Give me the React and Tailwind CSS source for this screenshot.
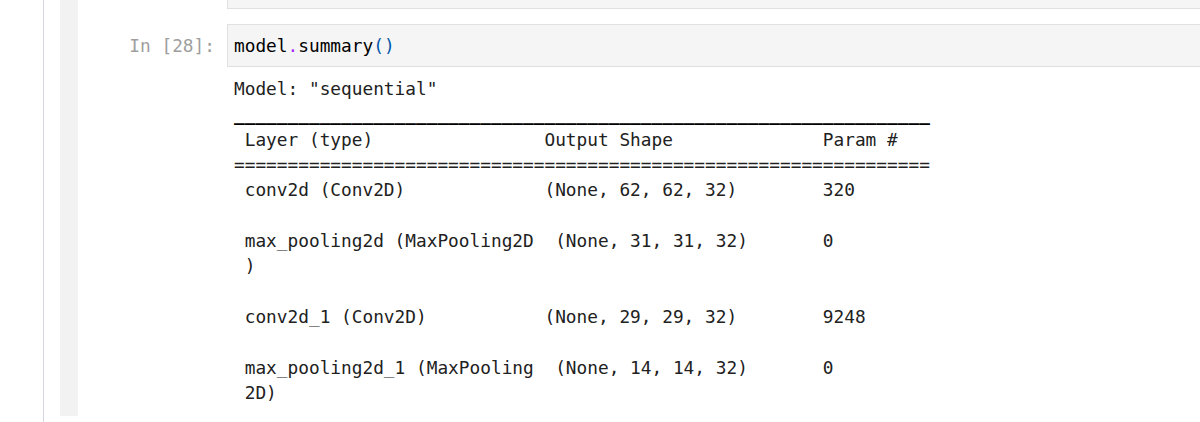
import React from "react";

const mono = { fontFamily: '"DejaVu Sans Mono", "Liberation Mono", monospace' };

const rows = [
  " Layer (type)                Output Shape              Param #   ",
  "=".repeat(65),
  " conv2d (Conv2D)             (None, 62, 62, 32)        320       ",
  "",
  " max_pooling2d (MaxPooling2D  (None, 31, 31, 32)       0         ",
  " )",
  "",
  " conv2d_1 (Conv2D)           (None, 29, 29, 32)        9248      ",
  "",
  " max_pooling2d_1 (MaxPooling  (None, 14, 14, 32)       0         ",
  " 2D)",
];

export default function App() {
  return (
    <div className="flex h-[422px] w-full overflow-hidden bg-white">
      <div className="w-[43px] shrink-0" />
      <div className="h-full w-px shrink-0 bg-[#d3d6df]" />
      <div className="w-[16px] shrink-0" />
      <div className="h-[416px] w-[18px] shrink-0 bg-[#f2f2f2]" />

      <div className="flex min-w-0 flex-1 flex-col">
        {/* previous cell, cut off at the top */}
        <div className="flex">
          <div className="w-[149px] shrink-0" />
          <div className="h-[9px] flex-1 border-b border-l border-[#e0e0e0] bg-[#f5f5f5]" />
        </div>

        {/* In [28] */}
        <div className="mt-[15px] flex">
          <div
            className="w-[149px] shrink-0 pr-[12px] pt-[9px] text-right text-[17.8px] leading-[25.3px] text-[#9e9e9e]"
            style={mono}
          >
            In [28]:
          </div>
          <div className="flex-1 border border-r-0 border-[#e0e0e0] bg-[#f5f5f5] px-[6px] py-[8px]">
            <pre className="text-[17.8px] leading-[25.3px] text-black" style={mono}>
              model<span className="text-[#aa22ff]">.</span>summary<span className="text-[#0055aa]">()</span>
            </pre>
          </div>
        </div>

        {/* output */}
        <div className="mt-[9px] flex">
          <div className="w-[156px] shrink-0" />
          <pre className="text-[17.8px] leading-[25.3px] text-[#212121]" style={mono}>
            {'Model: "sequential"\n'}
            <span className="font-bold text-black">{"_".repeat(65)}</span>
            {"\n" + rows.join("\n")}
          </pre>
        </div>
      </div>
    </div>
  );
}
